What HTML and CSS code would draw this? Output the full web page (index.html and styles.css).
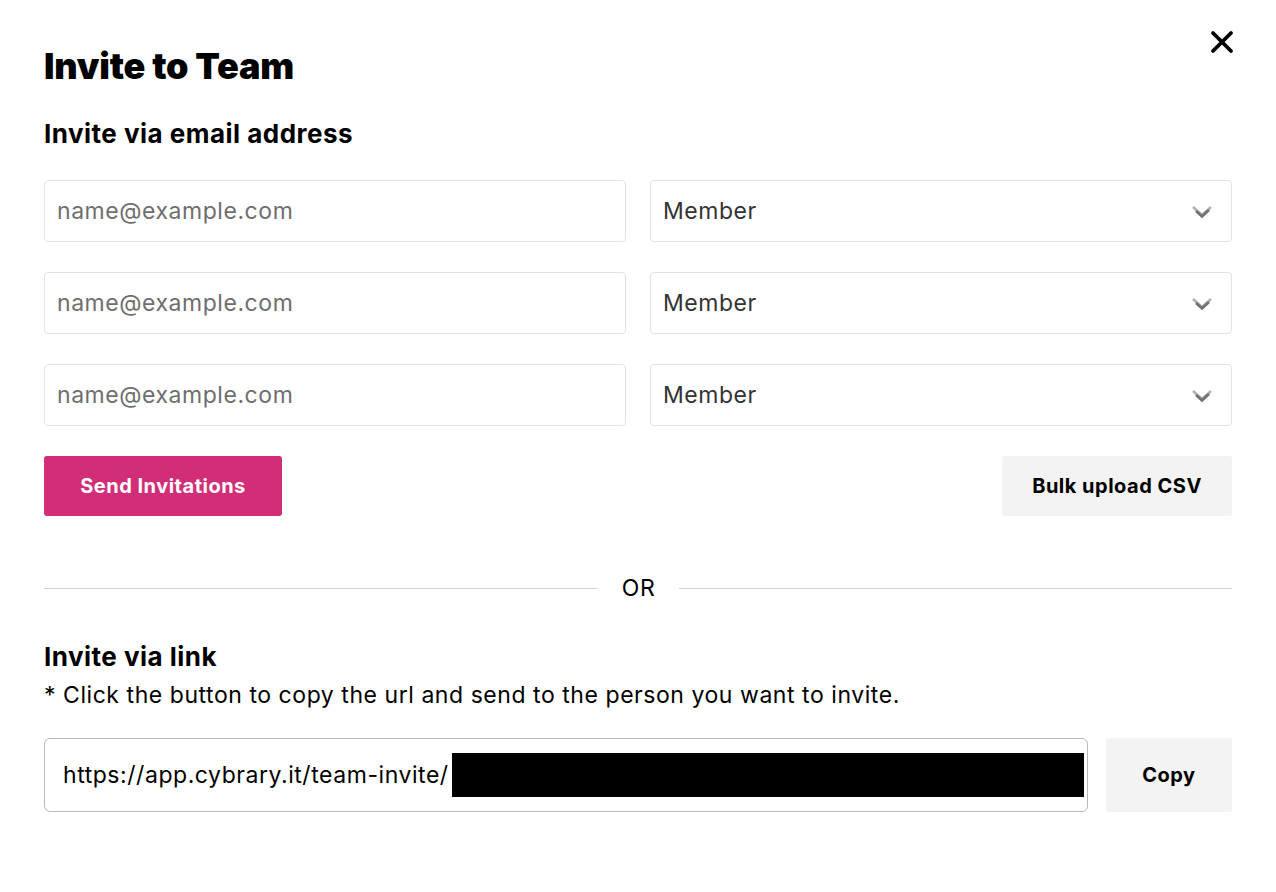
FILE: index.html
```html
<!DOCTYPE html>
<html>
<head>
<meta charset="utf-8">
<link rel="stylesheet" href="styles.css">
</head>
<body>
<div class="modal">
  <button class="close" aria-label="Close">
    <svg width="24" height="24" viewBox="0 0 24 24"><path d="M3 3 L21 21 M21 3 L3 21" stroke="#000" stroke-width="3.8" stroke-linecap="round"/></svg>
  </button>
  <h1 class="title">Invite to Team</h1>
  <h2 class="section-title">Invite via email address</h2>
  <div class="rows">
    <div class="row">
      <div class="field placeholder">name@example.com</div>
      <div class="field select">Member<span class="chev"><svg width="22" height="16" viewBox="0 0 22 16"><path d="M2 3 L11 11 L20 3" fill="none" stroke="#b0b0b0" stroke-width="2.6"/><path d="M5 7 L11 12.5 L18 6" fill="none" stroke="#707070" stroke-width="2.6"/></svg></span></div>
    </div>
    <div class="row">
      <div class="field placeholder">name@example.com</div>
      <div class="field select">Member<span class="chev"><svg width="22" height="16" viewBox="0 0 22 16"><path d="M2 3 L11 11 L20 3" fill="none" stroke="#b0b0b0" stroke-width="2.6"/><path d="M5 7 L11 12.5 L18 6" fill="none" stroke="#707070" stroke-width="2.6"/></svg></span></div>
    </div>
    <div class="row">
      <div class="field placeholder">name@example.com</div>
      <div class="field select">Member<span class="chev"><svg width="22" height="16" viewBox="0 0 22 16"><path d="M2 3 L11 11 L20 3" fill="none" stroke="#b0b0b0" stroke-width="2.6"/><path d="M5 7 L11 12.5 L18 6" fill="none" stroke="#707070" stroke-width="2.6"/></svg></span></div>
    </div>
  </div>
  <div class="actions">
    <button class="btn primary">Send Invitations</button>
    <button class="btn secondary bulk">Bulk upload CSV</button>
  </div>
  <div class="divider"><span class="line"></span><span class="or">OR</span><span class="line"></span></div>
  <h2 class="section-title link-title">Invite via link</h2>
  <p class="desc">* Click the button to copy the url and send to the person you want to invite.</p>
  <div class="link-row">
    <div class="url">https://app.cybrary.it/team-invite/<span class="redact"></span></div>
    <button class="btn secondary copy">Copy</button>
  </div>
</div>
</body>
</html>
```
FILE: styles.css
```css
* { box-sizing: border-box; }
html, body { margin: 0; padding: 0; background: #fff; }
body { font-family: Inter, "Noto Sans", sans-serif; color: #000; }
.modal { position: relative; padding: 44px 44px 0 44px; width: 1276px; height: 892px; }
.close { position: absolute; top: 30px; right: 42px; background: none; border: 0; padding: 0; width: 24px; height: 24px; cursor: pointer; }
.title { margin: 0; font-size: 36px; font-weight: 900; line-height: 44px; letter-spacing: -0.2px; }
.section-title { margin: 0; font-size: 26px; font-weight: 700; line-height: 32px; margin-top: 30px; letter-spacing: 0.48px; }
.rows { display: flex; flex-direction: column; gap: 30px; margin-top: 30px; }
.row { display: flex; gap: 24px; }
.field { flex: 1; height: 62px; border: 1px solid #e2e2e2; border-radius: 4px; display: flex; align-items: center; padding: 0 12px; font-size: 23px; letter-spacing: 0.55px; color: #333; }
.placeholder { color: #6e6e6e; }
.select { justify-content: space-between; }
.chev { display: flex; margin-right: 6px; margin-top: 2px; }
.actions { display: flex; justify-content: space-between; margin-top: 30px; }
.btn { border: 0; border-radius: 3px; font-family: Inter, "Noto Sans", sans-serif; font-weight: 700; font-size: 20px; letter-spacing: 0.5px; height: 60px; cursor: pointer; }
.primary { background: #d22e78; color: #fff; width: 238px; }
.secondary { background: #f3f3f3; color: #000; }
.bulk { width: 230px; }
.divider { display: flex; align-items: center; margin-top: 56px; height: 32px; }
.line { flex: 1; height: 1px; background: #cfcfcf; }
.or { padding: 0 24px 0 25px; font-size: 23px; letter-spacing: 0.55px; }
.link-title { margin-top: 37px; }
.desc { margin: 7px 0 0; font-size: 23px; letter-spacing: 0.55px; line-height: 30px; }
.link-row { display: flex; gap: 18px; margin-top: 28px; }
.url { flex: 1; height: 74px; border: 1px solid #b8b8b8; border-radius: 6px; display: flex; align-items: center; padding: 0 0 0 18px; font-size: 23px; letter-spacing: 0.55px; }
.redact { display: inline-block; width: 632px; height: 44px; background: #000; margin-left: 3px; }
.copy { width: 126px; height: 74px; }
```
